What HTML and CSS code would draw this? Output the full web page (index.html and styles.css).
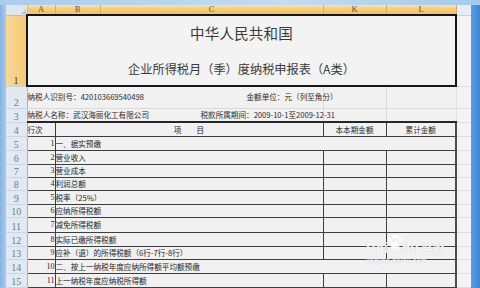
FILE: index.html
```html
<!DOCTYPE html>
<html lang="zh-CN">
<head>
<meta charset="utf-8">
<title>企业所得税月（季）度纳税申报表</title>
<link rel="stylesheet" href="styles.css">
</head>
<body>
<div class="screen">
  <div class="top-strip"></div>
  <div class="main">
    <div class="left-strip"></div>
    <table class="sheet">
      <colgroup>
        <col class="c-rh"><col class="c-a"><col class="c-b"><col class="c-c"><col class="c-k"><col class="c-l"><col class="c-x">
      </colgroup>
      <tr class="r-hdr">
        <th class="corner"><span class="corner-tri"></span></th>
        <th class="ch">A</th><th class="ch">B</th><th class="ch">C</th><th class="ch">K</th><th class="ch">L</th>
        <th class="ch-x"></th>
      </tr>
      <tr class="r-title">
        <td class="rh rh-sel">1</td>
        <td class="title-box" colspan="5">
          <div class="titles">
            <div class="t1">中华人民共和国</div>
            <div class="t2">企业所得税月（季）度纳税申报表（A类）</div>
          </div>
        </td>
        <td class="cx"></td>
      </tr>
      <tr class="r-info2">
        <td class="rh">2</td>
        <td class="info" colspan="3">
          <div class="info-line w2"><span>纳税人识别号：420103669540498</span><span>金额单位：元（列至角分）</span></div>
        </td>
        <td class="grid"></td><td class="grid"></td><td class="cx"></td>
      </tr>
      <tr class="r-info3">
        <td class="rh">3</td>
        <td class="info info-last" colspan="3">
          <div class="info-line w3"><span>纳税人名称：武汉海丽化工有限公司</span><span>税款所属期间：2009-10-1至2009-12-31</span></div>
        </td>
        <td class="grid info-last"></td><td class="grid info-last"></td><td class="cx"></td>
      </tr>
      <tr class="r14">
        <td class="rh">4</td>
        <td class="d d-a d-left">行次</td>
        <td class="d d-item" colspan="2">项　　目</td>
        <td class="d d-amt">本本期金额</td>
        <td class="d d-amt d-last">累计金额</td>
        <td class="cx"></td>
      </tr>
      <tr class="r14">
        <td class="rh">5</td>
        <td class="d d-a">1</td>
        <td class="d d-last" colspan="4">一、据实预缴</td>
        <td class="cx"></td>
      </tr>
      <tr class="r14">
        <td class="rh">6</td>
        <td class="d d-a">2</td>
        <td class="d" colspan="2">营业收入</td>
        <td class="d"></td><td class="d d-last"></td>
        <td class="cx"></td>
      </tr>
      <tr class="r13">
        <td class="rh">7</td>
        <td class="d d-a">3</td>
        <td class="d" colspan="2">营业成本</td>
        <td class="d"></td><td class="d d-last"></td>
        <td class="cx"></td>
      </tr>
      <tr class="r13">
        <td class="rh">8</td>
        <td class="d d-a">4</td>
        <td class="d" colspan="2">利润总额</td>
        <td class="d"></td><td class="d d-last"></td>
        <td class="cx"></td>
      </tr>
      <tr class="r14">
        <td class="rh">9</td>
        <td class="d d-a">5</td>
        <td class="d" colspan="2">税率（25%）</td>
        <td class="d"></td><td class="d d-last"></td>
        <td class="cx"></td>
      </tr>
      <tr class="r13">
        <td class="rh">10</td>
        <td class="d d-a">6</td>
        <td class="d" colspan="2">应纳所得税额</td>
        <td class="d"></td><td class="d d-last"></td>
        <td class="cx"></td>
      </tr>
      <tr class="r15">
        <td class="rh">11</td>
        <td class="d d-a">7</td>
        <td class="d" colspan="2">减免所得税额</td>
        <td class="d"></td><td class="d d-last"></td>
        <td class="cx"></td>
      </tr>
      <tr class="r14">
        <td class="rh">12</td>
        <td class="d d-a">8</td>
        <td class="d" colspan="2">实际已缴所得税额</td>
        <td class="d"></td><td class="d d-last"></td>
        <td class="cx"></td>
      </tr>
      <tr class="r13">
        <td class="rh">13</td>
        <td class="d d-a">9</td>
        <td class="d" colspan="2">应补（退）的所得税额（6行-7行-8行）</td>
        <td class="d"></td><td class="d d-last"></td>
        <td class="cx"></td>
      </tr>
      <tr class="r14">
        <td class="rh">14</td>
        <td class="d d-a">10</td>
        <td class="d d-last" colspan="4">二、按上一纳税年度应纳所得额平均额预缴</td>
        <td class="cx"></td>
      </tr>
      <tr class="r14">
        <td class="rh">15</td>
        <td class="d d-a">11</td>
        <td class="d" colspan="2">上一纳税年度应纳税所得额</td>
        <td class="d"></td><td class="d d-last"></td>
        <td class="cx"></td>
      </tr>
      <tr class="r14">
        <td class="rh"></td>
        <td class="d d-a"></td>
        <td class="d" colspan="2"></td>
        <td class="d"></td><td class="d d-last"></td>
        <td class="cx"></td>
      </tr>
    </table>
    <div class="right-strip"></div>
  </div>
  <div class="watermark">
    <div class="wm-logo">
      <span class="wm-bai">Bai</span>
      <svg class="wm-paw" width="16" height="16" viewBox="0 0 16 16">
        <ellipse cx="3" cy="6" rx="1.8" ry="2.2"/>
        <ellipse cx="6.5" cy="2.8" rx="1.8" ry="2.2"/>
        <ellipse cx="10" cy="2.8" rx="1.8" ry="2.2"/>
        <ellipse cx="13.3" cy="6" rx="1.8" ry="2.2"/>
        <path d="M8.2 7.5 C6 7.5 3.5 11 3.8 13.2 C4 15 6 14.8 8.2 14.3 C10.4 14.8 12.4 15 12.6 13.2 C12.9 11 10.4 7.5 8.2 7.5 Z"/>
      </svg>
      <span class="wm-du">du</span>
      <span class="wm-jy">经验</span>
    </div>
    <div class="wm-url">jingyan.baidu.com</div>
  </div>
</div>
</body>
</html>
```

FILE: styles.css
```css
html, body {
  margin: 0;
  padding: 0;
  overflow: hidden;
  background: #8fbbe6;
}

.screen {
  position: relative;
  width: 480px;
  height: 288px;
  overflow: hidden;
  display: flex;
  flex-direction: column;
  font-family: "Noto Sans CJK SC", "Noto Sans", sans-serif;
}

.top-strip {
  height: 5px;
  flex: none;
  background: linear-gradient(90deg, #a9cdee, #c2dcf3 60%, #a6c9ec);
}

.main {
  display: flex;
  flex: 1;
  min-height: 0;
}

.left-strip {
  width: 6px;
  flex: none;
  background: linear-gradient(90deg, #86b3e2, #a8caee);
}

.right-strip {
  width: 9px;
  flex: none;
  background: linear-gradient(90deg, #5a9ee3, #3d86d6);
}

.sheet {
  width: 465px;
  flex: none;
  table-layout: fixed;
  border-collapse: collapse;
  border-spacing: 0;
  background: #f1f1f1;
  align-self: flex-start;
}

.c-rh { width: 21px; }
.c-a { width: 28px; }
.c-b { width: 45px; }
.c-c { width: 223px; }
.c-k { width: 63px; }
.c-l { width: 70px; }
.c-x { width: 15px; }

.sheet th,
.sheet td {
  padding: 0;
  overflow: visible;
  white-space: nowrap;
}

/* header row */
.r-hdr { height: 10px; }

.corner {
  background: #dfe5ec;
  border-right: 1px solid #b5c0cc;
  border-bottom: 1px solid #b5c0cc;
  text-align: right;
  vertical-align: bottom;
  line-height: 0;
}

.corner-tri {
  display: inline-block;
  width: 0;
  height: 0;
  border-left: 5px solid transparent;
  border-bottom: 5px solid #b9c3cf;
  margin: 0 1px 1px 0;
}

.ch {
  background: linear-gradient(#fbe3b2, #f6cb78 45%, #f3c169);
  border-right: 1px solid #d9ab5e;
  border-bottom: 1px solid #c8964a;
  font-family: "Liberation Serif", serif;
  font-weight: normal;
  font-size: 8.5px;
  line-height: 9px;
  color: #5a5040;
  text-align: center;
  vertical-align: middle;
}

.ch-x {
  background: #e8edf3;
  border-bottom: 1px solid #c8d0da;
}

/* row headers */
.rh {
  background: #e2e9f2;
  border-right: 1px solid #a7b5c6;
  border-bottom: 1px solid #cbd5e1;
  font-family: "Liberation Serif", serif;
  font-size: 10px;
  line-height: 10px;
  color: #6b7a8e;
  text-align: center;
  vertical-align: bottom;
}

.rh-sel {
  background: linear-gradient(90deg, #f9d996, #f5c874);
  color: #4a4030;
  border-right: 1px solid #c8964a;
}

/* title */
.r-title { height: 71px; }

.title-box {
  border: 2px solid #161616;
  background: #f3f3f3;
  vertical-align: top;
}

.titles {
  display: flex;
  flex-direction: column;
  align-items: center;
  padding-top: 8px;
  gap: 19px;
  color: #3a3a3a;
}

.t1 {
  font-size: 14.5px;
  line-height: 18px;
  letter-spacing: 0.2px;
}

.t2 {
  font-size: 12.2px;
  line-height: 16px;
}

/* info rows */
.r-info2 { height: 22px; }
.r-info3 { height: 14px; }

.info {
  font-size: 7.6px;
  line-height: 10px;
  color: #2a2a2a;
  padding-left: 2px;
  vertical-align: middle;
  border-bottom: 1px solid #dadada;
}

.info-line {
  display: grid;
}

.info-line.w2 { grid-template-columns: 219px auto; }
.info-line.w3 { grid-template-columns: 173px auto; }

.grid {
  border-left: 1px solid #dadada;
  border-bottom: 1px solid #dadada;
}

.info-last {
  border-bottom: 2px solid #262626;
}

.cx {
  background: #f3f3f3;
  border-bottom: 1px solid #dcdcdc;
  border-left: 1px solid #e2e2e2;
}

/* data rows */
.r13 { height: 13px; }
.r14 { height: 14px; }
.r15 { height: 15px; }

.d {
  font-size: 7.6px;
  line-height: 9px;
  color: #262626;
  padding: 0 2px;
  vertical-align: middle;
  border-bottom: 1px solid #3e3e3e;
  border-right: 1px solid #3e3e3e;
}

.d-a {
  text-align: right;
  font-family: "Liberation Serif", "Noto Sans CJK SC", serif;
  font-size: 8px;
}

.d-left {
  text-align: left;
  font-family: "Noto Sans CJK SC", sans-serif;
  font-size: 7.6px;
}

.d-item {
  text-align: center;
  padding-left: 66px;
}

.d-amt {
  text-align: center;
}

.d-last {
  border-right: 2px solid #4a4a4a;
}

/* watermark */
.watermark {
  position: absolute;
  left: 366px;
  top: 234px;
  width: 90px;
  color: rgba(255, 255, 255, 0.85);
  text-shadow: 0 0 1px rgba(170, 170, 170, 0.6);
  pointer-events: none;
}

.wm-logo {
  display: flex;
  align-items: flex-end;
  font-family: "Liberation Sans", sans-serif;
  font-size: 14px;
  line-height: 16px;
  font-weight: bold;
}

.wm-paw {
  fill: rgba(255, 255, 255, 0.88);
  margin: 0 -1px 6px -1px;
}

.wm-jy {
  font-family: "Noto Sans CJK SC", sans-serif;
  font-size: 11px;
  font-weight: bold;
  margin-left: 3px;
  line-height: 15px;
}

.wm-url {
  font-family: "Liberation Sans", sans-serif;
  font-size: 6.5px;
  line-height: 9px;
  letter-spacing: 0.5px;
  color: rgba(255, 255, 255, 0.8);
}
```
